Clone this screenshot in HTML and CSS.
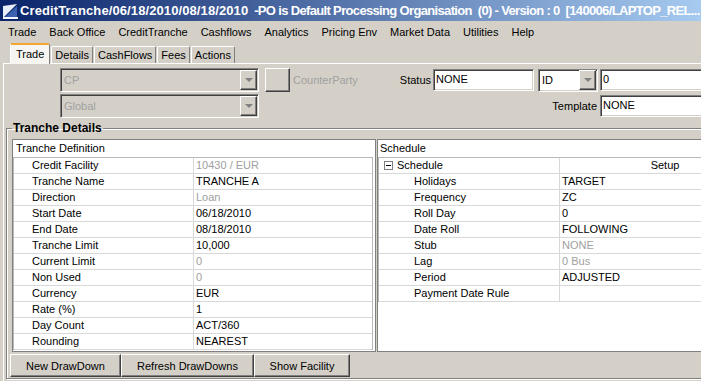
FILE: index.html
```html
<!DOCTYPE html>
<html lang="en">
<head>
  <meta charset="UTF-8">
  <title>CreditTranche</title>
  <link rel="stylesheet" href="styles.css">
</head>
<body>
  <div class="window">
    <div class="titlebar">
      <svg class="app-icon" viewBox="0 0 16 16">
        <polygon points="1,15 1,3 15,1" fill="#e8eef8"/>
        <polygon points="2,15 15,3 15,15" fill="#3a62b0"/>
        <rect x="1" y="14" width="15" height="2" fill="#f4f6fb"/>
      </svg>
      <span class="title"><span class="title-date">CreditTranche/06/18/2010/08/18/2010</span>&nbsp; -PO is Default Processing Organisation&nbsp; (0) - Version : 0&nbsp; [140006/LAPTOP_REL...</span>
    </div>

    <div class="menubar">
      <span>Trade</span>
      <span>Back Office</span>
      <span>CreditTranche</span>
      <span>Cashflows</span>
      <span>Analytics</span>
      <span>Pricing Env</span>
      <span>Market Data</span>
      <span>Utilities</span>
      <span>Help</span>
    </div>

    <div class="tabs">
      <span class="tab active">Trade</span>
      <span class="tab">Details</span>
      <span class="tab">CashFlows</span>
      <span class="tab">Fees</span>
      <span class="tab">Actions</span>
    </div>

    <div class="tabpanel">
      <div class="header-form">
        <div class="combo disabled"><span class="combo-text">CP</span><span class="drop"></span></div>
        <div class="cp-group">
          <span class="btn square"></span>
          <span class="dim-label">CounterParty</span>
        </div>
        <span class="label">Status</span>
        <span class="field">NONE</span>
        <div class="combo id-combo"><span class="combo-text">ID</span><span class="drop"></span></div>
        <span class="field">0</span>

        <div class="combo disabled"><span class="combo-text">Global</span><span class="drop"></span></div>
        <span class="label template-label">Template</span>
        <span class="field">NONE</span>
      </div>

      <fieldset class="group">
        <legend>Tranche Details</legend>
        <div class="panes">
          <div class="pane left-pane">
            <div class="pane-title">Tranche Definition</div>
            <div class="props">
              <div class="prop"><span class="key">Credit Facility</span><span class="val dim">10430 / EUR</span></div>
              <div class="prop"><span class="key">Tranche Name</span><span class="val">TRANCHE A</span></div>
              <div class="prop"><span class="key">Direction</span><span class="val dim">Loan</span></div>
              <div class="prop"><span class="key">Start Date</span><span class="val">06/18/2010</span></div>
              <div class="prop"><span class="key">End Date</span><span class="val">08/18/2010</span></div>
              <div class="prop"><span class="key">Tranche Limit</span><span class="val">10,000</span></div>
              <div class="prop"><span class="key">Current Limit</span><span class="val dim">0</span></div>
              <div class="prop"><span class="key">Non Used</span><span class="val dim">0</span></div>
              <div class="prop"><span class="key">Currency</span><span class="val">EUR</span></div>
              <div class="prop"><span class="key">Rate (%)</span><span class="val">1</span></div>
              <div class="prop"><span class="key">Day Count</span><span class="val">ACT/360</span></div>
              <div class="prop"><span class="key">Rounding</span><span class="val">NEAREST</span></div>
            </div>
          </div>

          <div class="pane right-pane">
            <div class="pane-title">Schedule</div>
            <div class="props">
              <div class="prop section"><span class="key"><span class="toggle"></span>Schedule</span><span class="val center">Setup</span></div>
              <div class="prop"><span class="key">Holidays</span><span class="val">TARGET</span></div>
              <div class="prop"><span class="key">Frequency</span><span class="val">ZC</span></div>
              <div class="prop"><span class="key">Roll Day</span><span class="val">0</span></div>
              <div class="prop"><span class="key">Date Roll</span><span class="val">FOLLOWING</span></div>
              <div class="prop"><span class="key">Stub</span><span class="val dim">NONE</span></div>
              <div class="prop"><span class="key">Lag</span><span class="val dim">0 Bus</span></div>
              <div class="prop"><span class="key">Period</span><span class="val">ADJUSTED</span></div>
              <div class="prop"><span class="key">Payment Date Rule</span><span class="val"></span></div>
            </div>
          </div>
        </div>

        <div class="actions">
          <button class="btn wide1">New DrawDown</button>
          <button class="btn wide2">Refresh DrawDowns</button>
          <button class="btn wide3">Show Facility</button>
        </div>
      </fieldset>
    </div>
  </div>
</body>
</html>
```

FILE: styles.css
```css
* {
  box-sizing: border-box;
}
body {
  margin: 0;
  font-family: "Liberation Sans", Arial, sans-serif;
  font-size: 11px;
  color: #000;
  background: #d4d0c8;
}
.window {
  width: 701px;
  height: 381px;
  overflow: hidden;
  background: #d4d0c8;
}

/* title bar */
.titlebar {
  height: 21px;
  display: flex;
  align-items: center;
  padding-left: 2px;
  background: linear-gradient(to right, #0a246a, #a6caf0);
  color: #fff;
  white-space: nowrap;
}
.app-icon {
  width: 16px;
  height: 16px;
  flex: none;
  margin-right: 2px;
}
.title {
  font-weight: bold;
  font-size: 13px;
  letter-spacing: -0.66px;
}
.title-date {
  letter-spacing: 0.1px;
}

/* menu */
.menubar {
  height: 21px;
  display: flex;
  align-items: center;
  gap: 13px;
  padding-left: 8px;
}

/* tabs */
.tabs {
  height: 21px;
  display: flex;
  align-items: flex-end;
  padding-left: 10px;
  gap: 1px;
}
.tab {
  height: 17px;
  line-height: 16px;
  padding: 0 3px;
  border-top: 1px solid #fff;
  border-left: 1px solid #fff;
  border-right: 1px solid #808080;
  border-radius: 2px 2px 0 0;
}
.tab.active {
  height: 21px;
  line-height: 19px;
  margin: 0 0 -1px 0;
  padding: 0 5px;
  background: #f6f5f1;
  border-top: 2px solid #f0a830;
  position: relative;
}

.tabpanel {
  margin-left: 3px;
  border-top: 1px solid #fff;
  border-left: 1px solid #fff;
  height: 318px;
}

/* header form */
.header-form {
  width: 706px;
  padding: 4px 0 0 56px;
  display: grid;
  grid-template-columns: 199px auto 1fr 101px 66px 110px;
  grid-auto-rows: 24px;
  row-gap: 2px;
  align-items: center;
}
.combo {
  height: 24px;
  display: flex;
  align-items: center;
  background: #fff;
  border: 1px solid;
  border-color: #808080 #fff #fff #808080;
  box-shadow: inset 1px 1px #404040, inset -1px -1px #d4d0c8;
  padding: 1px 1px 1px 2px;
}
.combo.disabled {
  background: #d4d0c8;
  color: #a0a0a0;
}
.combo-text {
  flex: 1;
  padding-left: 1px;
}
.drop {
  width: 17px;
  height: 20px;
  background: #d4d0c8;
  border: 1px solid;
  border-color: #fff #404040 #404040 #fff;
  box-shadow: inset -1px -1px #808080;
  position: relative;
}
.drop::after {
  content: "";
  position: absolute;
  left: 4px;
  top: 7px;
  border-left: 4px solid transparent;
  border-right: 4px solid transparent;
  border-top: 4px solid #808080;
}
.id-combo {
  margin-left: 4px;
  width: 60px;
  height: 23px;
}
.cp-group {
  display: flex;
  align-items: center;
  padding-left: 6px;
}
.btn.square {
  width: 25px;
  height: 24px;
}
.dim-label {
  color: #a0a0a0;
  margin-left: 3px;
}
.label {
  text-align: right;
  padding-right: 2px;
}
.template-label {
  grid-column: 2 / 6;
  padding-right: 3px;
}
.field {
  height: 22px;
  line-height: 18px;
  padding-left: 2px;
  background: #fff;
  border: 1px solid;
  border-color: #808080 #fff #fff #808080;
  box-shadow: inset 1px 1px #404040, inset -1px -1px #d4d0c8;
}

/* buttons */
.btn {
  display: inline-block;
  font: inherit;
  color: #000;
  background: #d4d0c8;
  border: 1px solid;
  border-color: #fff #404040 #404040 #fff;
  box-shadow: inset -1px -1px #808080;
  padding: 0;
}

/* group box */
.group {
  margin: 3px -74px 0 2px;
  padding: 0 5px 1px 5px;
  border: 1px solid #808080;
  box-shadow: inset 1px 1px #fff, 1px 1px #fff;
}
.group legend {
  font-weight: bold;
  font-size: 12px;
  line-height: 14px;
  padding: 0 1px;
}
.panes {
  margin-top: 4px;
  display: flex;
  gap: 1px;
  height: 213px;
}
.pane {
  background: #fff;
  border: 1px solid #808080;
}
.left-pane {
  width: 364px;
  flex: none;
}
.right-pane {
  flex: 1;
}
.pane-title {
  height: 17px;
  line-height: 16px;
  padding-left: 3px;
}
.right-pane .pane-title {
  padding-left: 2px;
}
.props {
  border: 1px solid #b8b8b8;
  border-bottom: none;
}
.left-pane .props {
  margin-right: 2px;
}
.right-pane .props {
  border-right: none;
}
.prop {
  display: grid;
  grid-template-columns: 180px 1fr;
  height: 16px;
  line-height: 15px;
  border-bottom: 1px solid #d8d8d8;
}
.key {
  padding-left: 18px;
  border-right: 1px solid #d8d8d8;
  white-space: nowrap;
}
.right-pane .prop {
  grid-template-columns: 181px 1fr;
}
.right-pane .key {
  padding-left: 35px;
}
.right-pane .section .key {
  padding-left: 5px;
  display: flex;
  align-items: center;
}
.toggle {
  width: 9px;
  height: 9px;
  border: 1px solid #808080;
  margin-right: 4px;
  position: relative;
}
.toggle::after {
  content: "";
  position: absolute;
  left: 1px;
  top: 3px;
  width: 5px;
  height: 1px;
  background: #000;
}
.val {
  padding-left: 2px;
  white-space: nowrap;
}
.val.dim {
  color: #a0a0a0;
}
.val.center {
  text-align: center;
}

.actions {
  display: flex;
  margin: 2px 0 0 -2px;
}
.actions .btn {
  height: 23px;
}
.wide1 { width: 111px; }
.wide2 { width: 133px; }
.wide3 { width: 96px; }
```
